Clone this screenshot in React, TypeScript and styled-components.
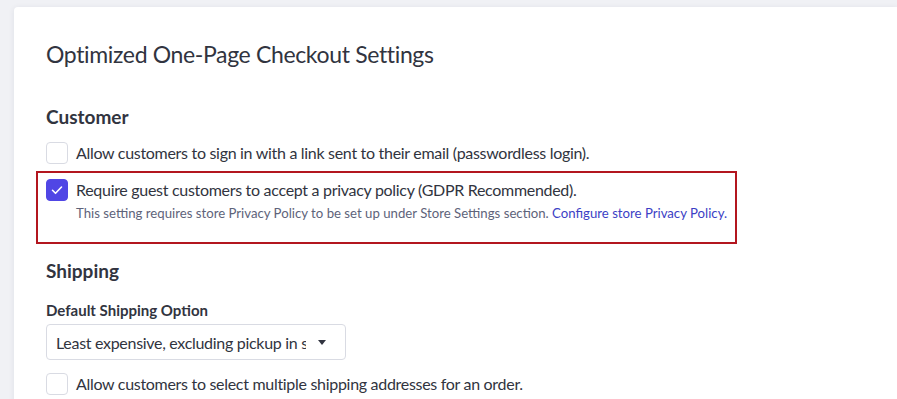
import React, { useState } from 'react'
import styled, { createGlobalStyle } from 'styled-components'

const GlobalStyle = createGlobalStyle`
  html, body {
    margin: 0;
    padding: 0;
    background: #f0f1f5;
    font-family: Lato, "Liberation Sans", sans-serif;
    color: #313440;
  }
`

const Page = styled.div`
  padding: 7px 0 0 14px;
  height: 399px;
  box-sizing: border-box;
  overflow: hidden;
`

const Card = styled.div`
  background: #ffffff;
  border-radius: 4px 0 0 0;
  box-shadow: 0 1px 6px rgba(30, 40, 70, 0.08);
  padding: 32px 0 0 32px;
  height: 100%;
`

const Title = styled.h1`
  margin: 0 0 35px;
  font-size: 23px;
  font-weight: 400;
  letter-spacing: -0.35px;
  line-height: 30px;
  color: #313440;
`

const SectionTitle = styled.h2`
  margin: 0 0 12px;
  font-size: 19px;
  font-weight: 700;
  line-height: 26px;
`

const Section = styled.section<{ gap?: number }>`
  display: flex;
  flex-direction: column;
  margin-bottom: ${({ gap }) => gap ?? 0}px;
`

const OptionRow = styled.label<{ highlighted?: boolean }>`
  display: flex;
  align-items: flex-start;
  gap: 8px;
  cursor: pointer;
  ${({ highlighted }) =>
    highlighted
      ? `
    margin: 7px 0 0 -10px;
    width: 701px;
    box-sizing: border-box;
    border: 2px solid #b3161f;
    padding: 6px 8px 20px 8px;
  `
      : `
    margin: 0;
    padding: 0;
  `}
`

const Box = styled.span<{ checked: boolean }>`
  flex: none;
  width: 20px;
  height: 20px;
  border-radius: 4px;
  border: 1px solid ${({ checked }) => (checked ? '#5046e5' : '#d9dbe3')};
  background: ${({ checked }) => (checked ? '#5046e5' : '#ffffff')};
  display: flex;
  align-items: center;
  justify-content: center;
`

const OptionText = styled.span`
  display: flex;
  flex-direction: column;
  font-size: 16px;
  letter-spacing: -0.3px;
  line-height: 22px;
  color: #313440;
`

const Hint = styled.span`
  font-size: 13.2px;
  letter-spacing: 0;
  line-height: 18px;
  white-space: nowrap;
  color: #5e637a;
  margin-top: 3px;
`

const Link = styled.a`
  color: #3c3fc5;
  text-decoration: none;
`

const FieldLabel = styled.div`
  font-size: 15px;
  font-weight: 700;
  line-height: 20px;
  margin: 4px 0 4px;
`

const Select = styled.div`
  width: 300px;
  height: 36px;
  box-sizing: border-box;
  border: 1px solid #d9dbe3;
  border-radius: 4px;
  display: flex;
  align-items: center;
  padding: 0 19px 0 9px;
  gap: 12px;
  font-size: 16px;
  letter-spacing: -0.3px;
  margin-bottom: 13px;
`

const SelectValue = styled.span`
  flex: 1;
  white-space: nowrap;
  overflow: hidden;
`

const Caret = styled.span`
  width: 0;
  height: 0;
  border-left: 4px solid transparent;
  border-right: 4px solid transparent;
  border-top: 5px solid #313440;
`

function Check({ checked, onToggle }: { checked: boolean; onToggle: () => void }) {
  return (
    <Box checked={checked} onClick={onToggle}>
      {checked ? (
        <svg width="14" height="14" viewBox="0 0 14 14" fill="none">
          <path d="M2.5 7.3l3 3 6-6.3" stroke="#fff" strokeWidth="1.6" strokeLinecap="round" strokeLinejoin="round" />
        </svg>
      ) : null}
    </Box>
  )
}

export default function App() {
  const [passwordless, setPasswordless] = useState(false)
  const [gdpr, setGdpr] = useState(true)
  const [multiAddress, setMultiAddress] = useState(false)

  return (
    <>
      <GlobalStyle />
      <Page>
        <Card>
          <Title>Optimized One-Page Checkout Settings</Title>
          <Section gap={14}>
            <SectionTitle>Customer</SectionTitle>
            <OptionRow>
              <Check checked={passwordless} onToggle={() => setPasswordless(!passwordless)} />
              <OptionText>Allow customers to sign in with a link sent to their email (passwordless login).</OptionText>
            </OptionRow>
            <OptionRow highlighted>
              <Check checked={gdpr} onToggle={() => setGdpr(!gdpr)} />
              <OptionText>
                Require guest customers to accept a privacy policy (GDPR Recommended).
                <Hint>
                  This setting requires store Privacy Policy to be set up under Store Settings section.{' '}
                  <Link href="#">Configure store Privacy Policy.</Link>
                </Hint>
              </OptionText>
            </OptionRow>
          </Section>
          <Section>
            <SectionTitle>Shipping</SectionTitle>
            <FieldLabel>Default Shipping Option</FieldLabel>
            <Select>
              <SelectValue>Least expensive, excluding pickup in store</SelectValue>
              <Caret />
            </Select>
            <OptionRow>
              <Check checked={multiAddress} onToggle={() => setMultiAddress(!multiAddress)} />
              <OptionText>Allow customers to select multiple shipping addresses for an order.</OptionText>
            </OptionRow>
          </Section>
        </Card>
      </Page>
    </>
  )
}
